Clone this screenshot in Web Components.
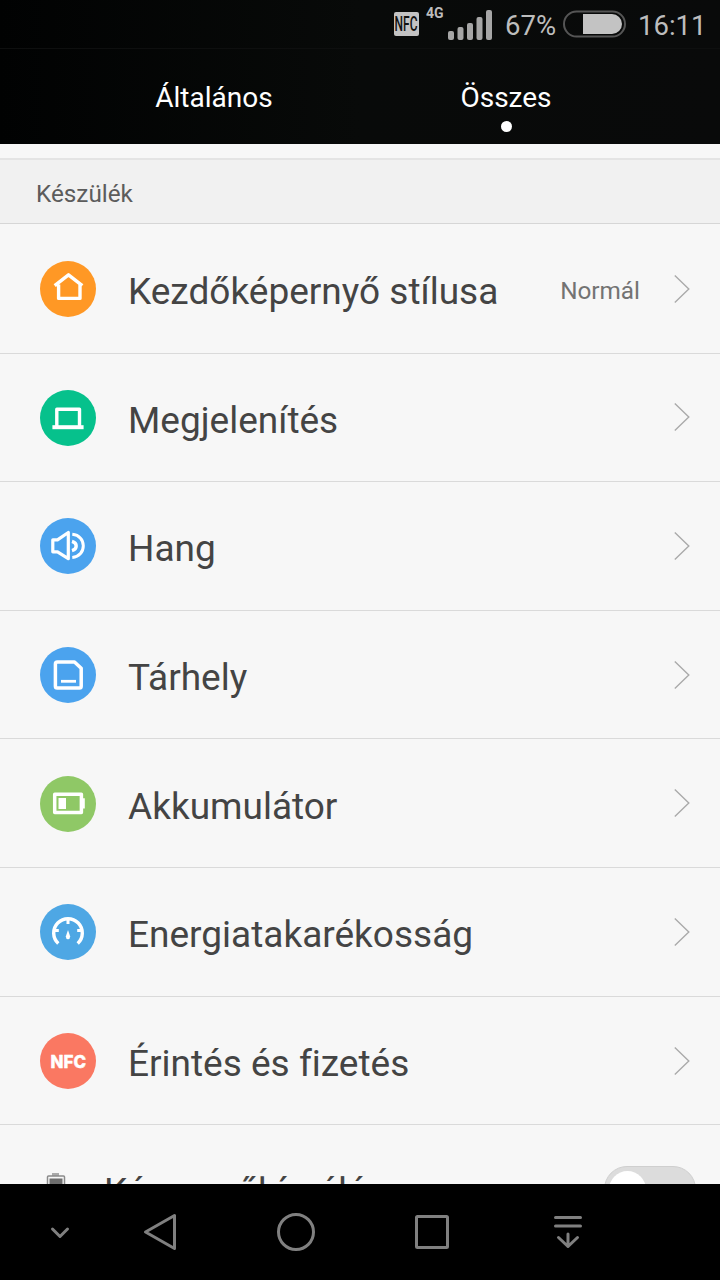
<!DOCTYPE html>
<html lang="hu">
<head>
<meta charset="utf-8">
<title>Beállítások</title>
<style>
  body {
    margin: 0;
    font-family: Roboto, "Noto Sans", sans-serif;
    font-variant-ligatures: none;
    background: #f7f7f7;
  }
</style>
</head>
<body>
<settings-screen>
  <status-bar slot="top"></status-bar>
  <tab-bar slot="top">
    <tab-item>Általános</tab-item>
    <tab-item active>Összes</tab-item>
  </tab-bar>

  <section-title>Készülék</section-title>
  <settings-row icon="home" color="#ff9825">Kezdőképernyő stílusa<span slot="value">Normál</span></settings-row>
  <settings-row icon="display" color="#06c18c">Megjelenítés</settings-row>
  <settings-row icon="sound" color="#4ba3ee">Hang</settings-row>
  <settings-row icon="storage" color="#4ba3ee">Tárhely</settings-row>
  <settings-row icon="battery" color="#8fc866">Akkumulátor</settings-row>
  <settings-row icon="gauge" color="#4ea7e4">Energiatakarékosság</settings-row>
  <settings-row icon="nfc" color="#fa7862">Érintés és fizetés</settings-row>
  <toggle-row>Képernyőkímélés</toggle-row>

  <nav-bar slot="bottom"></nav-bar>
</settings-screen>

<script>
// Glyphs for the round icons, drawn in a 56x56 box
const ICONS = {
  home: `<path d="M14.7 24.7 28.5 13.8 42.3 24.7M18.6 23.5V37.4H40V23.5" stroke-width="3.4"/>`,
  display: `<path d="M16.8 37V19.2H39.5V37" stroke-width="3.4"/><path d="M12.4 37.2H43.6" stroke-width="4"/>`,
  sound: `<path d="M12.8 21.8H17.5L28.3 14.5V40.7L17.5 33.8H12.8Z" stroke-width="3.2"/><path d="M32.3 16.3C39.5 17 43.3 22 43.3 27.8S39.5 38.8 32.3 39.5" stroke-width="3"/><path d="M32 23.4C37.6 25 37.6 31 32 32.6" stroke-width="3.4"/>`,
  storage: `<path d="M17.4 15H34.5L41.2 21.3V39.2Q41.2 41 39.4 41H17.2Q15.4 41 15.4 39.2V17Q15.4 15 17.4 15Z" stroke-width="3.5"/><path d="M21 34.3H36" stroke-width="2.8"/>`,
  battery: `<path d="M14.7 18.2H41.4V36.5H14.7Z" stroke-width="3.5"/><path d="M43 22.3H44.8V32.6H43Z" fill="#fff" stroke="none"/><path d="M18.5 22H26V33H18.5Z" fill="#fff" stroke="none"/>`,
  gauge: `<path d="M18.3 39.5A14.3 14.3 0 1 1 37.7 39.5" stroke-width="3.4"/><path d="M28 14V20M14 26.5H18.8M37.2 26.5H42" stroke-width="3"/><path d="M28 26 30.2 32.6Q30 35.3 28 35.3T25.8 32.6Z" fill="#fff" stroke="none"/>`
};

class SettingsScreen extends HTMLElement {
  constructor() {
    super();
    this.attachShadow({ mode: "open" }).innerHTML = `
      <style>
        :host {
          display: flex;
          flex-direction: column;
          height: 1280px;
          width: 720px;
          overflow: hidden;
        }
        header {
          flex: none;
          background: linear-gradient(90deg, #010202, #080a09 50%, #090a0a);
        }
        main {
          flex: 1;
          min-height: 0;
          overflow: hidden;
          padding-top: 14px;
          box-sizing: border-box;
        }
      </style>
      <header><slot name="top"></slot></header>
      <main><slot></slot></main>
      <slot name="bottom"></slot>
    `;
  }
}

class StatusBar extends HTMLElement {
  constructor() {
    super();
    this.attachShadow({ mode: "open" }).innerHTML = `
      <style>
        :host {
          display: flex;
          justify-content: flex-end;
          align-items: center;
          height: 48px;
          padding-right: 14px;
          box-sizing: border-box;
          color: #bdbdbd;
          font-size: 27.5px;
        }
        .nfc {
          width: 25px;
          height: 24px;
          background: #c3c3c3;
          border-radius: 2px;
        }
        .nfc span {
          display: block;
          width: 40px;
          padding-left: 1px;
          box-sizing: border-box;
          color: #111;
          font-size: 20px;
          line-height: 25px;
          font-weight: 500;
          transform: scaleX(.6);
          transform-origin: left;
        }
        svg { display: block; }
        .net {
          align-self: flex-start;
          margin: 5px 0 0 7px;
          font-size: 14px;
          line-height: 17px;
          font-weight: 700;
          width: 18px;
          white-space: nowrap;
        }
        .signal { margin: 1px 0 0 4px; }
        .percent { margin: 3px 0 0 11px; width: 54px; white-space: nowrap; }
        .battery { margin-left: 4px; }
        .clock { margin: 3px 0 0 11px; width: 68px; white-space: nowrap; }
      </style>
      <div class="nfc"><span>NFC</span></div>
      <span class="net">4G</span>
      <svg class="signal" width="46" height="34" fill="#a6a6a6">
        <rect x="0" y="23" width="6" height="9" rx="2"/>
        <rect x="9.5" y="19" width="6" height="13" rx="2"/>
        <rect x="19" y="15" width="6" height="17" rx="2"/>
        <rect x="28.5" y="9" width="6" height="23" rx="2"/>
        <rect x="38" y="2" width="6" height="30" rx="2"/>
      </svg>
      <span class="percent">67%</span>
      <svg class="battery" width="64" height="28">
        <rect x="1" y="1.5" width="61" height="25" rx="12.5" fill="none" stroke="#555" stroke-width="2"/>
        <path d="M20 4H49A10 10 0 0 1 49 24H20Z" fill="#c3c3c3"/>
      </svg>
      <span class="clock">16:11</span>
    `;
  }
}

class TabBar extends HTMLElement {
  constructor() {
    super();
    this.attachShadow({ mode: "open" }).innerHTML = `
      <style>
        :host {
          display: grid;
          grid-template-columns: 292px 292px;
          justify-content: center;
          height: 96px;
          box-sizing: border-box;
          border-top: 1px solid #0e0f0f;
        }
      </style>
      <slot></slot>
    `;
  }
}

class TabItem extends HTMLElement {
  constructor() {
    super();
    this.attachShadow({ mode: "open" }).innerHTML = `
      <style>
        :host {
          display: flex;
          flex-direction: column;
          align-items: center;
          padding-top: 31px;
          color: #fff;
          font-size: 28px;
          line-height: 36px;
        }
        i {
          width: 11px;
          height: 11px;
          margin-top: 5px;
          border-radius: 50%;
        }
        :host([active]) i { background: #fff; }
      </style>
      <span><slot></slot></span>
      <i></i>
    `;
  }
}

class SectionTitle extends HTMLElement {
  constructor() {
    super();
    this.attachShadow({ mode: "open" }).innerHTML = `
      <style>
        :host {
          display: flex;
          align-items: center;
          height: 66px;
          box-sizing: border-box;
          padding: 3px 36px 0;
          background: #f1f1f1;
          border-top: 2px solid #e4e4e4;
          border-bottom: 1px solid #d6d6d6;
          color: #5c5c5c;
          font-size: 24.3px;
        }
      </style>
      <slot></slot>
    `;
  }
}

class SettingsRow extends HTMLElement {
  constructor() {
    super();
    this.attachShadow({ mode: "open" });
  }

  connectedCallback() {
    const name = this.getAttribute("icon");
    const glyph = name === "nfc"
      ? `<text x="10.5" y="34.8" font-family="Inter" font-size="17.5" font-weight="800" fill="#fff" stroke-width=".4" textLength="35.5" lengthAdjust="spacingAndGlyphs">NFC</text>`
      : ICONS[name];

    this.shadowRoot.innerHTML = `
      <style>
        :host {
          display: flex;
          align-items: center;
          height: 128.65px;
          box-sizing: border-box;
          padding: 0 29px 0 40px;
          border-bottom: 1px solid #dadada;
          color: #444;
          font-size: 37px;
        }
        :host(:first-of-type) {
          height: 129.5px;
          padding-top: 1px;
        }
        svg { flex: none; display: block; }
        .icon { margin-top: 1px; }
        .label {
          flex: 1;
          margin: 6px 0 0 32px;
          white-space: nowrap;
        }
        .value {
          margin: 4px 34px 0 0;
          color: #737373;
          font-size: 24.3px;
        }
      </style>
      <svg class="icon" width="56" height="56" viewBox="0 0 56 56" fill="none" stroke="#fff" stroke-linejoin="round">
        <circle cx="28" cy="28" r="28" fill="${this.getAttribute("color")}" stroke="none"/>
        ${glyph}
      </svg>
      <span class="label"><slot></slot></span>
      <span class="value"><slot name="value"></slot></span>
      <svg width="17" height="30" fill="none" stroke="#aaa" stroke-width="1.4"><path d="M.8 1.5 14.8 15 .8 28.5"/></svg>
    `;
  }
}

class ToggleRow extends HTMLElement {
  constructor() {
    super();
    this.attachShadow({ mode: "open" }).innerHTML = `
      <style>
        :host {
          display: flex;
          align-items: flex-start;
          height: 128px;
          box-sizing: border-box;
          padding: 41px 24px 0 46px;
          color: #444;
          font-size: 37px;
        }
        .label { flex: 1; margin: 3px 0 0 38px; line-height: 46px; }
        .switch {
          width: 92px;
          height: 46px;
          box-sizing: border-box;
          padding: 4px;
          border-radius: 23px;
          border: 1px solid #cfcfcf;
          background: #dcdcdc;
        }
        .knob { width: 37px; height: 37px; border-radius: 50%; background: #fff; }
        svg { margin-top: 7px; }
      </style>
      <svg width="20" height="34">
        <rect x="6" y="0" width="7" height="3" fill="#aaa"/>
        <rect x="1.5" y="3" width="17" height="30" rx="1" fill="none" stroke="#8b8b8b" stroke-width="1.5"/>
        <rect x="3.5" y="5.5" width="13" height="25" fill="#6e6e6e"/>
      </svg>
      <span class="label"><slot></slot></span>
      <div class="switch"><div class="knob"></div></div>
    `;
  }
}

class NavBar extends HTMLElement {
  constructor() {
    super();
    this.attachShadow({ mode: "open" }).innerHTML = `
      <style>
        :host {
          flex: none;
          display: grid;
          grid-template-columns: 64px 136px 136px 136px 136px;
          padding-left: 28px;
          height: 96px;
          align-items: center;
          justify-items: center;
          background: #000;
        }
        svg { fill: none; stroke: #808080; stroke-width: 3; stroke-linecap: round; stroke-linejoin: round; }
      </style>
      <svg width="40" height="40"><path d="M12.5 17 20 24.5 27.5 17"/></svg>
      <svg width="40" height="40"><path d="M5.5 20 34.5 3.5V36.5Z"/></svg>
      <svg width="40" height="40"><circle cx="20" cy="20" r="17.5"/></svg>
      <svg width="40" height="40"><rect x="4.5" y="4.5" width="31" height="31" rx="1"/></svg>
      <svg width="40" height="40"><path d="M7.5 5.5H32.5M7.5 14H32.5M20 22V34.5M10.5 25.5 20 34.5 29.5 25.5"/></svg>
    `;
  }
}

customElements.define("settings-screen", SettingsScreen);
customElements.define("status-bar", StatusBar);
customElements.define("tab-bar", TabBar);
customElements.define("tab-item", TabItem);
customElements.define("section-title", SectionTitle);
customElements.define("settings-row", SettingsRow);
customElements.define("toggle-row", ToggleRow);
customElements.define("nav-bar", NavBar);
</script>
</body>
</html>
